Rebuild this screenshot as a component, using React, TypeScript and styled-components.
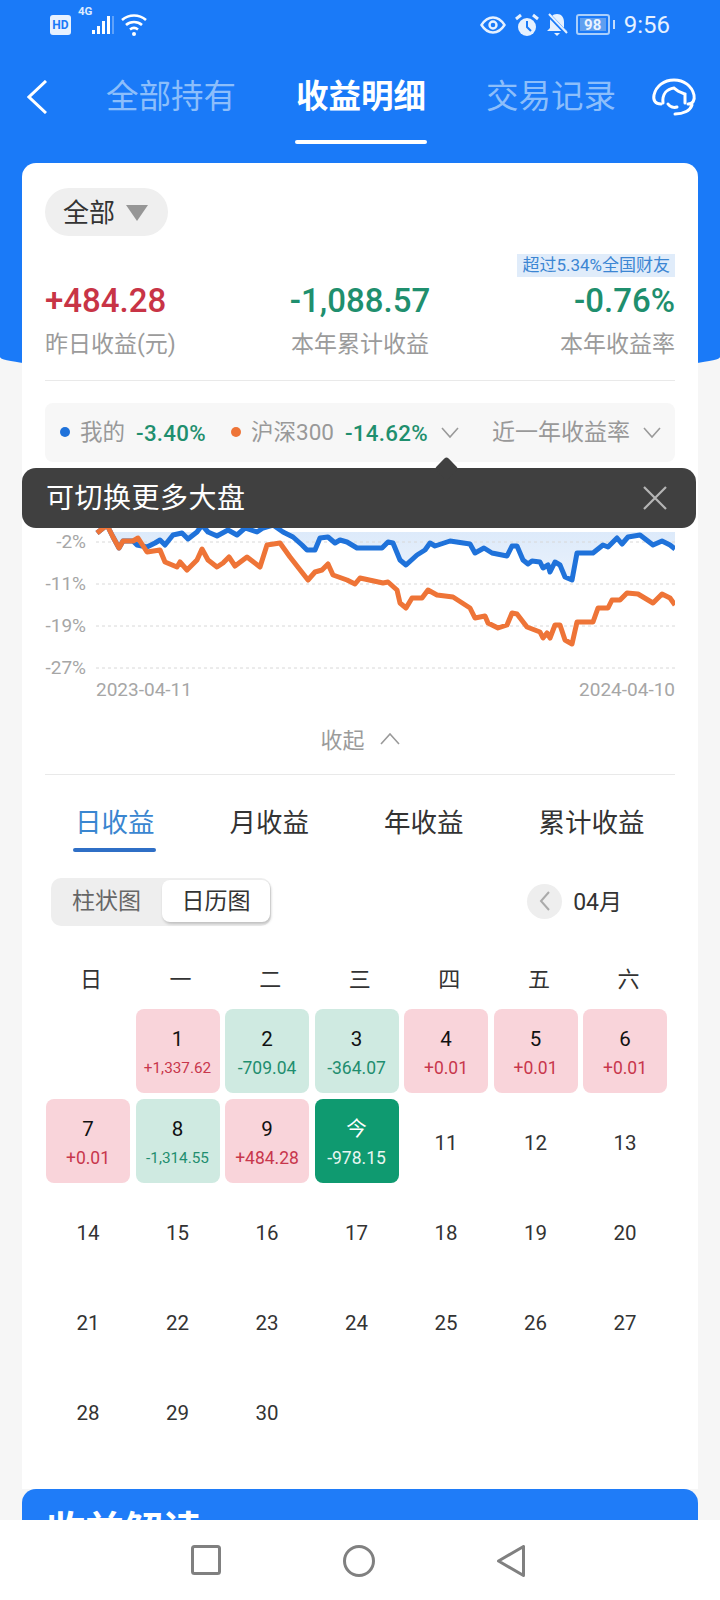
import React, { FC } from "react";
import styled, { createGlobalStyle } from "styled-components";

const FONT = `Roboto, "Noto Sans CJK SC", sans-serif`;

const GlobalStyle = createGlobalStyle`
  html, body {
    margin: 0;
    padding: 0;
    background: #f6f6f6;
    font-family: ${FONT};
  }
  * { box-sizing: border-box; }
`;

const Page = styled.div`
  position: relative;
  width: 720px;
  height: 1600px;
  overflow: hidden;
  background: #f6f6f6;
`;

const HeaderBg = styled.div`
  position: absolute;
  top: 0;
  left: 0;
  width: 720px;
  height: 374px;
  background: #1a7af8;
  border-radius: 0 0 50% 50% / 0 0 17px 17px;
`;

const Content = styled.div`
  position: relative;
`;

const StatusBar = styled.div`
  display: flex;
  align-items: center;
  height: 49px;
  padding: 0 50px;
  color: #fff;
`;

const StatusGroup = styled.div<{ $end?: boolean }>`
  display: flex;
  align-items: center;
  margin-left: ${(p) => (p.$end ? "auto" : 0)};
`;

const HdBadge = styled.span`
  display: flex;
  align-items: center;
  justify-content: center;
  width: 21px;
  height: 20px;
  border-radius: 3px;
  background: #e6f1ff;
  color: #1a7af8;
  font-size: 12px;
  font-weight: 700;
`;

const NetLabel = styled.span`
  align-self: flex-start;
  margin: -9px 0 0 7px;
  font-size: 11.5px;
  font-weight: 700;
  color: #dcebff;
`;

const StatusIcon = styled.svg<{ $gap: number }>`
  margin-left: ${(p) => p.$gap}px;
`;

const Battery = styled.span`
  display: flex;
  align-items: center;
  justify-content: center;
  width: 34px;
  height: 21px;
  margin-left: 8px;
  border: 2px solid #a9cffc;
  border-radius: 3px;
  color: #eaf3ff;
  font-size: 15px;
  font-weight: 700;
  background: linear-gradient(#5f9ff0, #5f9ff0) 2px 2px / 26px 13px no-repeat;
`;

const BatteryCap = styled.span`
  width: 2px;
  height: 9px;
  margin: 0 9px 0 3px;
  background: #c5defc;
`;

const Clock = styled.span`
  font-size: 24px;
  color: #e6f1ff;
`;

const TopNav = styled.div`
  display: flex;
  align-items: center;
  height: 95px;
  padding: 0 23px 0 27px;
`;

const TopTabs = styled.div`
  display: flex;
  gap: 60px;
  margin-left: 59px;
`;

const TopTab = styled.div<{ $active?: boolean }>`
  position: relative;
  font-size: 32.5px;
  line-height: 44px;
  font-weight: ${(p) => (p.$active ? 700 : 400)};
  color: ${(p) => (p.$active ? "#fff" : "#8cbefb")};
  &::after {
    content: "";
    display: ${(p) => (p.$active ? "block" : "none")};
    position: absolute;
    left: -1px;
    right: -1px;
    bottom: -25px;
    height: 4px;
    border-radius: 2px;
    background: #fff;
  }
`;

const Headset = styled.svg`
  margin-left: auto;
`;

const Card = styled.div`
  margin: 19px 22px 0;
  height: 1326px;
  padding: 25px 23px 0;
  background: #fff;
  border-radius: 14px 14px 0 0;
`;

const FilterPill = styled.div`
  display: flex;
  align-items: center;
  width: 123px;
  height: 48px;
  padding-left: 18px;
  border-radius: 24px;
  background: #efefef;
  color: #333;
  font-size: 26px;
  &::after {
    content: "";
    margin: 2px 0 0 11px;
    border-top: 16px solid #969696;
    border-left: 11px solid transparent;
    border-right: 11px solid transparent;
  }
`;

const PillText = styled.span`
  margin-bottom: 4px;
`;

const BadgeRow = styled.div`
  display: flex;
  justify-content: flex-end;
  margin-top: 18px;
`;

const RankBadge = styled.span`
  display: block;
  height: 23px;
  padding: 0 5px;
  background: #e0ecfa;
  color: #3c86d3;
  font-size: 17px;
  line-height: 22px;
`;

const Stats = styled.div`
  display: grid;
  grid-template-columns: 1fr auto 1fr;
  height: 103px;
`;

const Stat = styled.div<{ $align: string }>`
  display: flex;
  flex-direction: column;
  align-items: ${(p) => p.$align};
`;

const StatValue = styled.div<{ $up?: boolean }>`
  margin-top: 3px;
  font-size: 33px;
  line-height: 42px;
  font-weight: 500;
  color: ${(p) => (p.$up ? "#c83446" : "#1f8f6e")};
`;

const StatLabel = styled.div`
  margin-top: 7px;
  font-size: 23px;
  line-height: 32px;
  color: #9b9b9b;
`;

const Divider = styled.div`
  height: 1px;
  background: #e9e9e9;
`;

const Legend = styled.div`
  display: flex;
  align-items: center;
  height: 59px;
  margin-top: 22px;
  padding-left: 15px;
  border-radius: 8px;
  background: #f7f7f7;
  color: #999;
  font-size: 22.5px;
`;

const LegendName = styled.span`
  margin-bottom: 5px;
`;

const Dot = styled.span<{ $color: string; $first?: boolean }>`
  width: 10px;
  height: 10px;
  margin: 0 10px 2px ${(p) => (p.$first ? 0 : 25)}px;
  border-radius: 50%;
  background: ${(p) => p.$color};
`;

const LegendValue = styled.span`
  margin-left: 11px;
  font-size: 22.3px;
  font-weight: 500;
  letter-spacing: 0.3px;
  color: #1f8f6e;
`;

const LegendChevron = styled.svg<{ $left: number }>`
  margin-left: ${(p) => p.$left}px;
`;

const RangeLabel = styled.span`
  margin: 0 0 5px 33px;
  font-size: 23px;
`;

const ChartBox = styled.div`
  position: relative;
  height: 238px;
`;

const ChartSvg = styled.svg`
  display: block;
`;

const AxisText = styled.text`
  font-family: ${FONT};
  font-size: 19px;
  fill: #a6a6a6;
`;

const Tooltip = styled.div`
  position: absolute;
  left: -23px;
  top: 6px;
  display: flex;
  align-items: center;
  justify-content: space-between;
  width: 674px;
  height: 60px;
  padding: 0 29px 0 24px;
  border-radius: 14px;
  background: #404040;
  color: #fff;
  font-size: 28px;
  letter-spacing: 0.5px;
  &::before {
    content: "";
    position: absolute;
    left: 416px;
    top: -8px;
    width: 17px;
    height: 17px;
    border-radius: 3px;
    background: #404040;
    transform: rotate(45deg);
  }
`;

const TooltipText = styled.span`
  margin-bottom: 4px;
`;

const CollapseRow = styled.div`
  display: flex;
  align-items: center;
  justify-content: center;
  gap: 15px;
  height: 66px;
  margin-top: 8px;
  padding-bottom: 4px;
  color: #9b9b9b;
  font-size: 22px;
`;

const CollapseText = styled.span`
  margin-bottom: 2px;
`;

const ProfitTabs = styled.div`
  display: flex;
  gap: 75px;
  margin: 30px 0 0 30px;
`;

const ProfitTab = styled.div<{ $active?: boolean }>`
  position: relative;
  font-size: 26.5px;
  line-height: 36px;
  color: ${(p) => (p.$active ? "#3a86d0" : "#333")};
  &::after {
    content: "";
    display: ${(p) => (p.$active ? "block" : "none")};
    position: absolute;
    left: -2px;
    right: -1px;
    bottom: -11px;
    height: 4px;
    border-radius: 2px;
    background: #2f6fc6;
  }
`;

const ControlRow = styled.div`
  display: flex;
  align-items: center;
  height: 48px;
  margin: 37px 53px 0 6px;
`;

const Segments = styled.div`
  display: flex;
  width: 220px;
  height: 48px;
  padding: 2px 1px 4px 0;
  border-radius: 10px;
  background: #eee;
  font-size: 23px;
`;

const Segment = styled.div<{ $active?: boolean }>`
  display: flex;
  align-items: center;
  justify-content: center;
  flex: ${(p) => (p.$active ? "0 0 108px" : "1")};
  padding-bottom: 5px;
  border-radius: 8px;
  color: ${(p) => (p.$active ? "#333" : "#666")};
  background: ${(p) => (p.$active ? "#fff" : "transparent")};
  box-shadow: ${(p) => (p.$active ? "1px 2px 3px rgba(0,0,0,0.2)" : "none")};
`;

const PrevButton = styled.div`
  display: flex;
  align-items: center;
  justify-content: center;
  width: 35px;
  height: 35px;
  margin: 0 0 2px auto;
  border-radius: 50%;
  background: #eee;
`;

const MonthLabel = styled.span`
  margin: 0 0 5px 11px;
  color: #333;
  font-size: 23px;
`;

const WeekRow = styled.div`
  display: grid;
  grid-template-columns: repeat(7, 84px);
  column-gap: 5.6px;
  height: 32px;
  margin: 38px 0 13px 4px;
  color: #333;
  font-size: 22px;
  line-height: 32px;
  text-align: center;
`;

const CalendarGrid = styled.div`
  display: grid;
  grid-template-columns: repeat(7, 84px);
  grid-auto-rows: 84px;
  gap: 6px 5.5px;
  margin-left: 1px;
`;

const palette = {
  up: { bg: "#f9d4da", fg: "#c8374c" },
  down: { bg: "#cfeae1", fg: "#1f8e6f" },
  today: { bg: "#0f9a70", fg: "#e8f6f1" },
};

type Kind = keyof typeof palette;

const DayCell = styled.div<{ $kind?: Kind }>`
  display: flex;
  flex-direction: column;
  align-items: center;
  justify-content: ${(p) => (p.$kind ? "flex-start" : "center")};
  padding-top: ${(p) => (p.$kind ? 18 : 4)}px;
  border-radius: 8px;
  background: ${(p) => (p.$kind ? palette[p.$kind].bg : "transparent")};
  color: ${(p) => (p.$kind === "today" ? "#fff" : p.$kind ? "#111" : "#333")};
`;

const DayNumber = styled.div`
  font-size: 20.5px;
  line-height: 24px;
`;

const DayValue = styled.div<{ $kind: Kind; $long?: boolean }>`
  margin-top: 7px;
  font-size: ${(p) => (p.$long ? 15.3 : 17.5)}px;
  line-height: 20px;
  color: ${(p) => palette[p.$kind].fg};
`;

const BlueSection = styled.div`
  height: 120px;
  margin: 0 22px;
  padding: 17px 24px;
  border-radius: 14px 14px 0 0;
  background: #1f7cf8;
  color: #fff;
  font-size: 39px;
  line-height: 50px;
  font-weight: 700;
`;

const BottomNav = styled.div`
  position: absolute;
  left: 0;
  right: 0;
  bottom: 0;
  display: flex;
  justify-content: center;
  gap: 122px;
  height: 80px;
  padding: 25px 4px 0 0;
  background: #fff;
`;

const blueLine =
  "97,533 107,525 113,537 119,548 123,541 133,541 137,545 147,547 155,543 160,540 165,545 173,535 182,533 188,539 197,532 202,525 208,532 217,536 228,530 237,535 245,528 257,532 263,528 273,525 283,532 293,537 302,545 307,550 315,550 320,538 328,537 335,543 340,540 347,542 357,548 382,548 388,542 393,543 400,560 406,565 417,555 425,550 430,543 435,546 450,541 470,544 475,553 484,548 492,553 507,556 512,546 517,546 523,560 528,564 532,561 540,562 543,568 548,565 550,572 555,562 560,565 565,577 572,580 577,553 593,553 603,545 608,547 617,538 622,544 628,537 640,535 653,545 662,541 670,545 675,549";

const orangeLine =
  "97,533 107,525 113,537 119,548 123,541 133,541 138,538 147,552 160,550 165,562 177,567 180,562 187,570 197,560 202,549 208,560 217,567 223,563 229,557 235,566 247,557 260,567 267,545 280,543 290,557 308,580 315,572 322,570 328,564 333,575 347,580 355,584 360,578 383,583 388,582 397,590 400,603 406,608 412,598 422,598 428,590 437,595 453,597 470,608 475,618 485,616 488,623 498,628 507,625 512,613 517,614 527,627 540,632 543,638 547,633 550,638 555,625 560,625 565,640 572,644 577,622 593,622 598,608 608,608 612,600 620,600 627,593 638,594 653,603 662,594 670,598 675,605";

const gridLines = [
  { y: 542, label: "-2%" },
  { y: 584, label: "-11%" },
  { y: 626, label: "-19%" },
  { y: 668, label: "-27%" },
];

const Chart: FC = () => (
  <ChartSvg width={630} height={238} viewBox="45 462 630 238">
    <defs>
      <linearGradient id="area" x1="0" y1="0" x2="0" y2="1">
        <stop offset="0" stopColor="#dbe9fa" />
        <stop offset="1" stopColor="#eaf2fc" />
      </linearGradient>
      <clipPath id="areaClip">
        <rect x="96" y="532" width="580" height="60" />
      </clipPath>
    </defs>
    <polygon
      points={`96,532 ${blueLine} 675,532`}
      fill="url(#area)"
      clipPath="url(#areaClip)"
    />
    {gridLines.map((g) => (
      <g key={g.label}>
        <line x1="96" x2="675" y1={g.y} y2={g.y} stroke="#d8d8d8" strokeDasharray="3 3" />
        <AxisText x="86" y={g.y + 6} textAnchor="end">
          {g.label}
        </AxisText>
      </g>
    ))}
    <polyline points={blueLine} fill="none" stroke="#1f72da" strokeWidth="5" strokeLinejoin="round" />
    <polyline points={orangeLine} fill="none" stroke="#ee7437" strokeWidth="5" strokeLinejoin="round" />
    <AxisText x="96" y="696">2023-04-11</AxisText>
    <AxisText x="675" y="696" textAnchor="end">2024-04-10</AxisText>
  </ChartSvg>
);

const Chevron: FC<{ left: number }> = ({ left }) => (
  <LegendChevron $left={left} width="18" height="12" viewBox="0 0 18 12" fill="none" stroke="#9a9a9a" strokeWidth="1.6">
    <path d="M1 1l8 9 8-9" />
  </LegendChevron>
);

const days: { label: string; kind?: Kind; value?: string; long?: boolean }[] = [
  { label: "1", kind: "up", value: "+1,337.62", long: true },
  { label: "2", kind: "down", value: "-709.04" },
  { label: "3", kind: "down", value: "-364.07" },
  { label: "4", kind: "up", value: "+0.01" },
  { label: "5", kind: "up", value: "+0.01" },
  { label: "6", kind: "up", value: "+0.01" },
  { label: "7", kind: "up", value: "+0.01" },
  { label: "8", kind: "down", value: "-1,314.55", long: true },
  { label: "9", kind: "up", value: "+484.28" },
  { label: "今", kind: "today", value: "-978.15" },
  ...Array.from({ length: 20 }, (_, i) => ({ label: String(i + 11) })),
];

const App: FC = () => {
  return (
    <Page>
      <GlobalStyle />
      <HeaderBg />
      <Content>
        <StatusBar>
          <StatusGroup>
            <HdBadge>HD</HdBadge>
            <NetLabel>4G</NetLabel>
            <svg width="22" height="20" viewBox="0 0 22 20" fill="#fff">
              <rect x="0" y="15" width="3" height="4" />
              <rect x="5" y="11" width="3" height="8" />
              <rect x="10" y="6" width="3" height="13" />
              <rect x="15" y="1" width="3" height="18" />
              <rect x="20" y="1" width="2" height="18" opacity="0.3" />
            </svg>
            <StatusIcon $gap={7} width="27" height="24" viewBox="0 0 27 24" fill="none" stroke="#fff" strokeWidth="2.6">
              <path d="M1 7c7-6 17-6 24 0" />
              <path d="M5 12c4.500-4 11.500-4 16 0" />
              <path d="M9 16.500c2.500-2 5.500-2 8 0" />
              <circle cx="13" cy="21" r="2" fill="#fff" stroke="none" />
            </StatusIcon>
          </StatusGroup>
          <StatusGroup $end>
            <StatusIcon $gap={0} width="26" height="18" viewBox="0 0 26 18" fill="none" stroke="#e6f1ff" strokeWidth="2.4">
              <path d="M1.500 9C5 3.500 9 1.500 13 1.500S21 3.500 24.500 9C21 14.500 17 16.500 13 16.500S5 14.500 1.500 9z" />
              <circle cx="13" cy="9" r="3.500" />
            </StatusIcon>
            <StatusIcon $gap={9} width="24" height="24" viewBox="0 0 24 24">
              <circle cx="12" cy="14" r="9" fill="#e6f1ff" />
              <path d="M12 8v6l4 4" fill="none" stroke="#1a7af8" strokeWidth="2" />
              <path d="M1 6l5-4M23 6l-5-4" stroke="#e6f1ff" strokeWidth="3" />
            </StatusIcon>
            <StatusIcon $gap={7} width="22" height="23" viewBox="0 0 22 23">
              <path d="M11 1c4.500 0 7 3.500 7 8v6l3 3H1l3-3V9c0-4.500 2.500-8 7-8z" fill="#e6f1ff" />
              <path d="M8 20h6l-3 3z" fill="#e6f1ff" />
              <path d="M2 1l19 20" stroke="#1a7af8" strokeWidth="4" />
              <path d="M3 1l18 19" stroke="#e6f1ff" strokeWidth="2" />
            </StatusIcon>
            <Battery>98</Battery>
            <BatteryCap />
            <Clock>9:56</Clock>
          </StatusGroup>
        </StatusBar>

        <TopNav>
          <svg width="20" height="34" viewBox="0 0 20 34" fill="none" stroke="#fff" strokeWidth="3">
            <path d="M19 1L2 17l17 16" />
          </svg>
          <TopTabs>
            <TopTab>全部持有</TopTab>
            <TopTab $active>收益明细</TopTab>
            <TopTab>交易记录</TopTab>
          </TopTabs>
          <Headset width="46" height="42" viewBox="0 0 46 42" fill="none" stroke="#fff" strokeWidth="3" strokeLinecap="round">
            <path d="M10 28C4 28 2 24 3 19C5 10 13 4 23 4C33 4 41 10 43 19C44 24 42 28 37 28" />
            <path d="M12 27C11 18 16 13 23 12C27 16 31 17 34 18C34 21 34 24 34 27" />
            <path d="M17 28C19 31 23 32 26 31" />
            <path d="M41 29C39 35 32 38 24 38" />
          </Headset>
        </TopNav>

        <Card>
          <FilterPill>
            <PillText>全部</PillText>
          </FilterPill>
          <BadgeRow>
            <RankBadge>超过5.34%全国财友</RankBadge>
          </BadgeRow>
          <Stats>
            <Stat $align="flex-start">
              <StatValue $up>+484.28</StatValue>
              <StatLabel>昨日收益(元)</StatLabel>
            </Stat>
            <Stat $align="center">
              <StatValue>-1,088.57</StatValue>
              <StatLabel>本年累计收益</StatLabel>
            </Stat>
            <Stat $align="flex-end">
              <StatValue>-0.76%</StatValue>
              <StatLabel>本年收益率</StatLabel>
            </Stat>
          </Stats>
          <Divider />

          <Legend>
            <Dot $color="#1f72da" $first />
            <LegendName>我的</LegendName>
            <LegendValue>-3.40%</LegendValue>
            <Dot $color="#ee7437" />
            <LegendName>沪深300</LegendName>
            <LegendValue>-14.62%</LegendValue>
            <Chevron left={13} />
            <RangeLabel>近一年收益率</RangeLabel>
            <Chevron left={13} />
          </Legend>
          <ChartBox>
            <Chart />
            <Tooltip>
              <TooltipText>可切换更多大盘</TooltipText>
              <svg width="24" height="24" viewBox="0 0 24 24" stroke="#b5b5b5" strokeWidth="2.2">
                <path d="M1 1l22 22M23 1L1 23" />
              </svg>
            </Tooltip>
          </ChartBox>

          <CollapseRow>
            <CollapseText>收起</CollapseText>
            <svg width="20" height="12" viewBox="0 0 20 12" fill="none" stroke="#9a9a9a" strokeWidth="1.6">
              <path d="M1 11l9-10 9 10" />
            </svg>
          </CollapseRow>
          <Divider />

          <ProfitTabs>
            <ProfitTab $active>日收益</ProfitTab>
            <ProfitTab>月收益</ProfitTab>
            <ProfitTab>年收益</ProfitTab>
            <ProfitTab>累计收益</ProfitTab>
          </ProfitTabs>

          <ControlRow>
            <Segments>
              <Segment>柱状图</Segment>
              <Segment $active>日历图</Segment>
            </Segments>
            <PrevButton>
              <svg width="12" height="20" viewBox="0 0 12 20" fill="none" stroke="#aaa" strokeWidth="2">
                <path d="M10 1L2 10l8 9" />
              </svg>
            </PrevButton>
            <MonthLabel>04月</MonthLabel>
          </ControlRow>

          <WeekRow>
            {["日", "一", "二", "三", "四", "五", "六"].map((d) => (
              <span key={d}>{d}</span>
            ))}
          </WeekRow>

          <CalendarGrid>
            <DayCell />
            {days.map((d) => (
              <DayCell key={d.label} $kind={d.kind}>
                <DayNumber>{d.label}</DayNumber>
                {d.kind && d.value && (
                  <DayValue $kind={d.kind} $long={d.long}>
                    {d.value}
                  </DayValue>
                )}
              </DayCell>
            ))}
          </CalendarGrid>
        </Card>

        <BlueSection>收益解读</BlueSection>
      </Content>

      <BottomNav>
        <svg width="30" height="30" viewBox="0 0 30 30" fill="none" stroke="#808080" strokeWidth="3">
          <rect x="1.500" y="1.500" width="27" height="27" rx="2" />
        </svg>
        <svg width="32" height="32" viewBox="0 0 32 32" fill="none" stroke="#808080" strokeWidth="3">
          <circle cx="16" cy="16" r="14.500" />
        </svg>
        <svg width="28" height="32" viewBox="0 0 28 32" fill="none" stroke="#808080" strokeWidth="3" strokeLinejoin="round">
          <path d="M26.500 1.500v29L1.500 16z" />
        </svg>
      </BottomNav>
    </Page>
  );
};

export default App;
